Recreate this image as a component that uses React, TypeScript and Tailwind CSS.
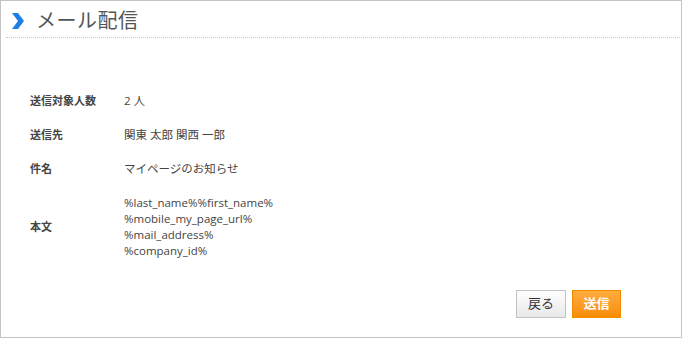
import React from 'react';

const rows = [
  { label: '送信対象人数', value: ['2 人'] },
  { label: '送信先', value: ['関東 太郎 関西 一郎'] },
  { label: '件名', value: ['マイページのお知らせ'] },
  {
    label: '本文',
    value: ['%last_name%%first_name%', '%mobile_my_page_url%', '%mail_address%', '%company_id%'],
  },
];

const App: React.FC = () => {
  return (
    <div
      className="w-[682px] h-[338px] border border-[#c4c4c4] bg-white text-[#333] flex flex-col"
      style={{ fontFamily: '"Open Sans", "Noto Sans CJK JP", sans-serif' }}
    >
      {/* Header */}
      <div className="ml-[5px] mr-[1px] h-[37px] border-b border-dotted border-[#c8c8c8] flex items-center pt-[3px]">
        <svg width="14" height="16" viewBox="0 0 14 16" className="ml-[5px] mr-[11px]">
          <path d="M1 0 L7 0 L13 8 L7 16 L1 16 L7 8 Z" fill="#1d7fe6" />
        </svg>
        <h1 className="text-[20px] leading-none text-[#555] tracking-[0.5px]">メール配信</h1>
      </div>

      {/* Table */}
      <div className="mt-[46px] pl-[29px]">
        {rows.map((row) => (
          <div key={row.label} className="flex items-center py-[9px] leading-[16px]">
            <div className="w-[94px] text-[11px] font-bold leading-[16px] text-[#444]">{row.label}</div>
            <div className="text-[11.5px] leading-[16px] text-[#444]">
              {row.value.map((v) => (
                <div key={v}>{v}</div>
              ))}
            </div>
          </div>
        ))}
      </div>

      {/* Buttons */}
      <div className="flex justify-end gap-[6px] pr-[60px] mt-[22px]">
        <button className="w-[50px] h-[28px] border border-[#c2c2c2] bg-gradient-to-b from-white to-[#e8e8e8] text-[13px] text-[#333]">
          戻る
        </button>
        <button className="w-[49px] h-[28px] border border-[#f08c00] bg-gradient-to-b from-[#ffab3d] to-[#f98d00] text-[13px] font-bold text-white">
          送信
        </button>
      </div>
    </div>
  );
};

export default App;
